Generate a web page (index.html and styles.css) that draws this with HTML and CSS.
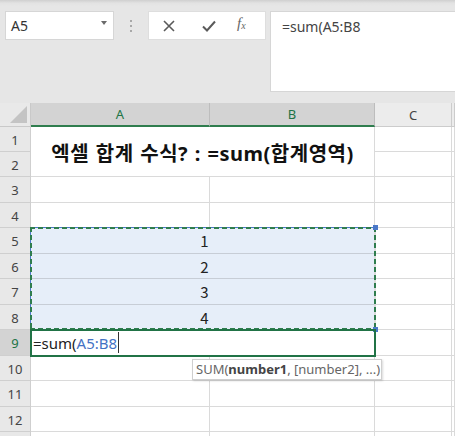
FILE: index.html
```html
<!DOCTYPE html>
<html lang="ko">
<head>
<meta charset="utf-8">
<link rel="stylesheet" href="styles.css">
</head>
<body>
<div class="app">
  <div class="toolbar">
    <div class="namebox"><span>A5</span><span class="dd"></span></div>
    <div class="sep"><i></i><i></i><i></i></div>
    <div class="btns">
      <svg class="ico" width="14" height="14" viewBox="0 0 14 14"><path d="M2 2 L12 12 M12 2 L2 12" stroke="#5a5a5a" stroke-width="1.6" fill="none"/></svg>
      <svg class="ico" width="16" height="14" viewBox="0 0 16 14"><path d="M2 7.5 L6 11.5 L14 2.5" stroke="#5a5a5a" stroke-width="2" fill="none"/></svg>
      <span class="fx">f<sub>x</sub></span>
    </div>
    <div class="formula">=sum(A5:B8</div>
  </div>
  <div class="sheet">
    <div class="corner"><span class="tri"></span></div>
    <div class="ch sel">A</div>
    <div class="ch sel">B</div>
    <div class="ch">C</div>
    <div class="ch last"></div>

    <div class="rh">1</div><div class="title">엑셀 합계 수식? : =sum(합계영역)</div><div class="c"></div><div class="c"></div>
    <div class="rh">2</div><div class="c"></div><div class="c"></div>
    <div class="rh">3</div><div class="c"></div><div class="c"></div><div class="c"></div><div class="c"></div>
    <div class="rh">4</div><div class="c"></div><div class="c"></div><div class="c"></div><div class="c"></div>
    <div class="rh">5</div><div class="m num">1</div><div class="c"></div><div class="c"></div>
    <div class="rh">6</div><div class="m num">2</div><div class="c"></div><div class="c"></div>
    <div class="rh">7</div><div class="m num">3</div><div class="c"></div><div class="c"></div>
    <div class="rh">8</div><div class="m num lastm">4</div><div class="c"></div><div class="c"></div>
    <div class="rh act">9</div><div class="edit"><span>=sum(</span><span class="ref">A5:B8</span><span class="caret"></span></div><div class="c"></div><div class="c"></div>
    <div class="rh">10</div><div class="c"></div><div class="c"></div><div class="c"></div><div class="c"></div>
    <div class="rh">11</div><div class="c"></div><div class="c"></div><div class="c"></div><div class="c"></div>
    <div class="rh">12</div><div class="c"></div><div class="c"></div><div class="c"></div><div class="c"></div>
    <div class="rh"></div><div class="c"></div><div class="c"></div><div class="c"></div><div class="c"></div>

    <div class="marquee"><span class="h h1"></span><span class="h h2"></span></div>
    <div class="tip">SUM(<b>number1</b>, [number2], ...)</div>
  </div>
</div>
</body>
</html>
```

FILE: styles.css
```css
* { box-sizing: border-box; }
html, body { margin: 0; padding: 0; }
body { width: 455px; height: 436px; overflow: hidden; background: #e6e6e6; font-family: "Noto Sans", "Noto Sans CJK KR", sans-serif; }
.app { width: 455px; height: 436px; display: flex; flex-direction: column; overflow: hidden; }

.toolbar {
  height: 103px; flex: none;
  display: flex; align-items: flex-start;
  padding: 11px 0 0 5px;
  background: linear-gradient(#cfcfcf 0, #e2e2e2 3px, #e6e6e6 6px);
}
.namebox {
  width: 109px; height: 29px; background: #fff; border: 1px solid #d6d6d6;
  display: flex; align-items: center; justify-content: space-between;
  padding: 0 6px 0 5px; font-size: 14px; color: #333;
}
.dd { width: 0; height: 0; border-left: 3.5px solid transparent; border-right: 3.5px solid transparent; border-top: 4px solid #6a6a6a; margin-top: -6px; }
.sep { width: 34px; height: 29px; display: flex; flex-direction: column; align-items: center; justify-content: center; gap: 3px; }
.sep i { width: 2px; height: 2px; background: #a8a8a8; display: block; }
.btns {
  width: 118px; height: 29px; background: #fff; border: 1px solid #dedede;
  display: flex; align-items: center; padding: 0 0 0 13px;
}
.btns .ico:first-child { margin-right: 25px; }
.btns .ico:nth-child(2) { margin-right: 20px; }
.fx { font-family: "Liberation Serif", serif; font-style: italic; font-size: 15px; color: #666; margin-top: -4px; }
.fx sub { font-size: 10px; vertical-align: -1px; }
.formula {
  flex: 1; height: 81px; margin-left: 4px; background: #fff; border: 1px solid #d6d6d6; border-right: none;
  padding: 5px 11px; font-size: 14px; color: #444; line-height: 20px;
}

.sheet {
  position: relative; flex: none; height: 333px; background: #fff; overflow: hidden;
  display: grid;
  grid-template-columns: 31px 179px 165px 77px 1fr;
  grid-template-rows: 24px 25px 25px 26px 25px 26px 25px 26px 25px 26px 25px 26px 25px 26px;
  font-family: "Noto Sans CJK KR", "Noto Sans", sans-serif;
}
.sheet > div { border-right: 1px solid #dadada; border-bottom: 1px solid #dadada; }
.corner { background: #e9e9e9; position: relative; border-color: #c9c9c9 !important; }
.tri { position: absolute; right: 3px; bottom: 3px; width: 0; height: 0; border-left: 17px solid transparent; border-bottom: 17px solid #c4c4c4; }
.ch {
  background: #ececec; border-color: #cccccc !important; display: flex; align-items: center; justify-content: center;
  font-family: "Noto Sans", sans-serif; font-size: 13px; color: #444;
}
.ch.sel { background: #d3d3d3; color: #217346; border-bottom: 2px solid #2f7d4e !important; border-right-color: #bdbdbd !important; }
.rh {
  background: #e8e8e8; border-color: #cfcfcf !important; display: flex; align-items: center; justify-content: center;
  font-family: "Noto Sans", sans-serif; font-size: 13px; color: #444; padding-top: 1px;
}
.rh.act { background: #d3d3d3; color: #217346; }
.title {
  grid-column: 2 / 4; grid-row: 2 / 4; display: flex; align-items: center; justify-content: center;
  font-family: "Noto Sans", "Noto Sans CJK KR", sans-serif;
  font-weight: 700; font-size: 20px; color: #111; word-spacing: 1px; letter-spacing: 0.5px; padding-top: 1px;
  white-space: nowrap;
}
.m { grid-column: 2 / 4; background: #e6eef9; border-bottom-color: #c7cdd6 !important; }
.num { display: flex; align-items: center; justify-content: center; font-size: 15px; color: #222; padding-left: 4px; }
.edit {
  grid-column: 2 / 4; position: relative; z-index: 2;
  outline: 2px solid #217346; outline-offset: -1px;
  display: flex; align-items: center; padding-left: 2px; font-size: 15px; color: #222;
  font-family: "Noto Sans", sans-serif;
}
.edit .ref { color: #4472c4; }
.caret { width: 1px; height: 21px; background: #333; margin-left: 1px; }

.marquee {
  position: absolute; left: 30px; top: 124px; width: 346px; height: 103px;
  border: 1px solid #4a78c8; pointer-events: none; z-index: 1;
}
.marquee::before {
  content: ""; position: absolute; left: -1px; top: -1px; right: -1px; bottom: -1px;
  background:
    repeating-linear-gradient(90deg, #2f7d4e 0 5px, transparent 5px 8px) top left / 100% 2px no-repeat,
    repeating-linear-gradient(90deg, #2f7d4e 0 5px, transparent 5px 8px) bottom left / 100% 2px no-repeat,
    repeating-linear-gradient(180deg, #2f7d4e 0 5px, transparent 5px 8px) top left / 2px 100% no-repeat,
    repeating-linear-gradient(180deg, #2f7d4e 0 5px, transparent 5px 8px) top right / 2px 100% no-repeat;
}
.h { position: absolute; width: 5px; height: 5px; background: #4a78c8; right: -3px; }
.h1 { top: -3px; }
.h2 { bottom: -3px; }

.tip {
  position: absolute; left: 192px; top: 256px; height: 21px; width: 190px; z-index: 3;
  background: #fff; border: 1px solid #cfcfcf !important; box-shadow: 1px 1px 2px rgba(0,0,0,0.15);
  font-family: "Noto Sans", sans-serif; font-size: 13px; color: #666; line-height: 19px; padding: 0 3px;
  white-space: nowrap;
}
.tip b { color: #444; }
```
